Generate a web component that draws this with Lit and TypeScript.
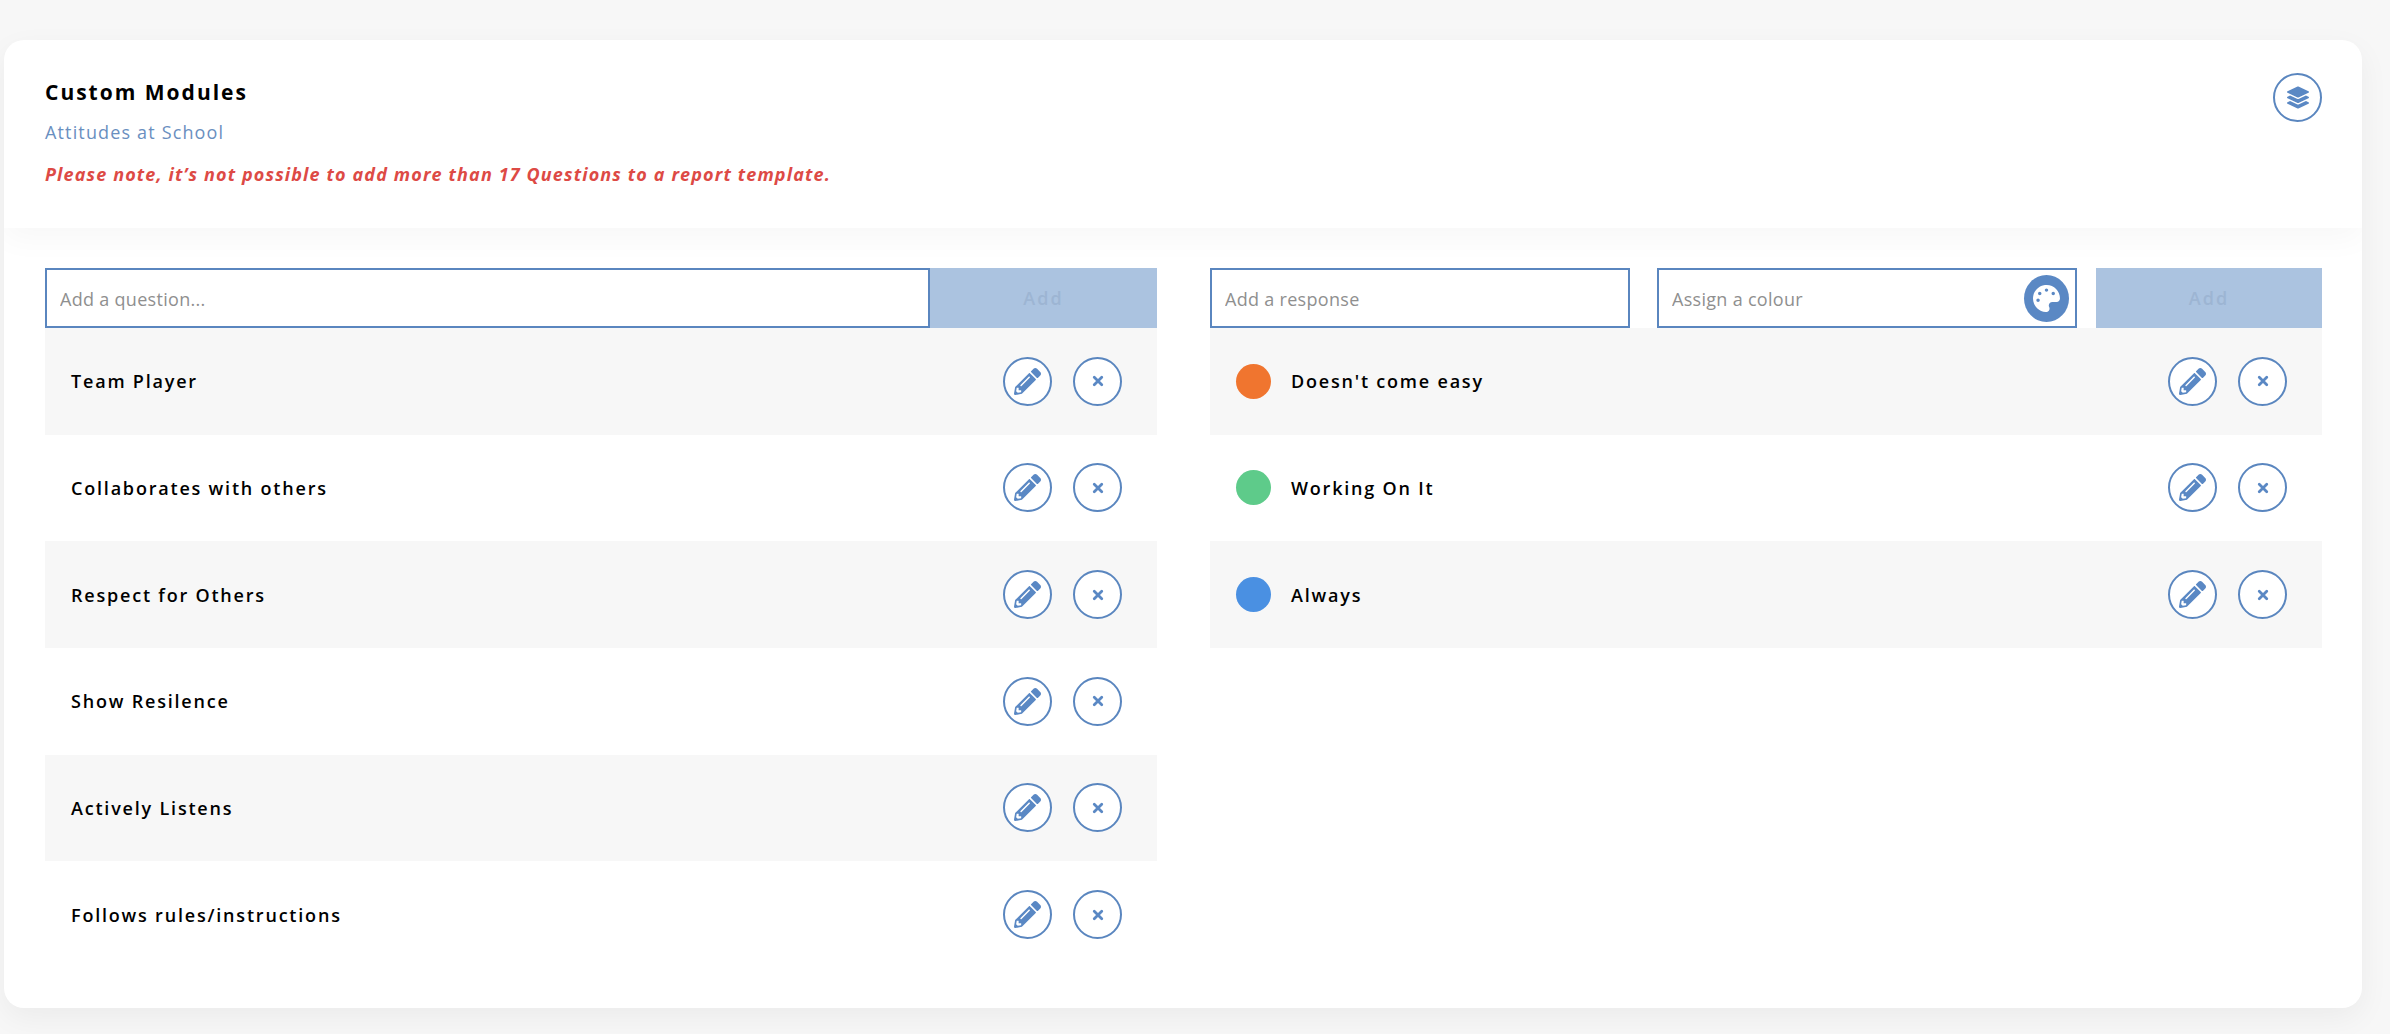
import { LitElement, html, css, svg } from 'lit';
import { customElement } from 'lit/decorators.js';

const PENCIL = svg`<path d="M497.9 142.1l-46.1 46.1c-4.7 4.7-12.3 4.7-17 0l-111-111c-4.7-4.7-4.7-12.3 0-17l46.1-46.1c18.7-18.7 49.1-18.7 67.9 0l60.1 60.1c18.8 18.7 18.8 49.1 0 67.9zM284.2 99.8L21.6 362.4.4 483.9c-2.9 16.4 11.4 30.6 27.8 27.8l121.5-21.3 262.6-262.6c4.7-4.7 4.7-12.3 0-17l-111-111c-4.8-4.7-12.4-4.7-17.1 0zM124.1 339.9c-5.5-5.5-5.5-14.3 0-19.8l154-154c5.5-5.5 14.3-5.5 19.8 0s5.5 14.3 0 19.8l-154 154c-5.5 5.5-14.3 5.5-19.8 0zM88 424h48v36.3l-64.5 11.3-31.1-31.1L51.7 376H88v48z"/>`;
const LAYERS = svg`<path d="M12.41 148.02l232.94 105.67c6.8 3.09 14.49 3.09 21.29 0l232.94-105.67c16.55-7.51 16.55-32.52 0-40.03L266.65 2.31a25.607 25.607 0 0 0-21.29 0L12.41 107.98c-16.55 7.51-16.55 32.53 0 40.04zm487.18 88.28l-58.09-26.33-161.64 73.27c-7.56 3.43-15.59 5.17-23.86 5.17s-16.29-1.74-23.86-5.17L70.51 209.97l-58.1 26.33c-16.55 7.5-16.55 32.5 0 40l232.94 105.59c6.8 3.08 14.49 3.08 21.29 0L499.59 276.3c16.55-7.5 16.55-32.5 0-40zm0 127.8l-57.87-26.23-161.86 73.37c-7.56 3.43-15.59 5.17-23.86 5.17s-16.29-1.74-23.86-5.17L70.29 337.87 12.41 364.1c-16.55 7.5-16.55 32.5 0 40l232.94 105.59c6.8 3.08 14.49 3.08 21.29 0L499.59 404.1c16.55-7.5 16.55-32.5 0-40z"/>`;
const PALETTE = svg`<path d="M204.3 5C104.9 24.4 24.8 104.3 5.2 203.4c-37 187 131.7 326.4 258.8 306.7 41.2-6.4 61.4-54.6 42.5-91.7-23.1-45.4 9.9-98.4 60.9-98.4h79.7c35.8 0 64.8-29.6 64.9-65.3C511.5 97.1 368.1-26.9 204.3 5zM96 320c-17.7 0-32-14.3-32-32s14.3-32 32-32 32 14.3 32 32-14.3 32-32 32zm32-128c-17.7 0-32-14.3-32-32s14.3-32 32-32 32 14.3 32 32-14.3 32-32 32zm128-64c-17.7 0-32-14.3-32-32s14.3-32 32-32 32 14.3 32 32-14.3 32-32 32zm128 64c-17.7 0-32-14.3-32-32s14.3-32 32-32 32 14.3 32 32-14.3 32-32 32z"/>`;
const TIMES = svg`<path d="M96 96l320 320M416 96L96 416" fill="none" stroke="currentColor" stroke-width="120" stroke-linecap="round"/>`;

const QUESTIONS = [
	'Team Player',
	'Collaborates with others',
	'Respect for Others',
	'Show Resilence',
	'Actively Listens',
	'Follows rules/instructions',
];

const RESPONSES = [
	{ label: "Doesn't come easy", colour: '#f0752f' },
	{ label: 'Working On It', colour: '#5ecb8a' },
	{ label: 'Always', colour: '#4a90e2' },
];

@customElement('app-root')
export default class AppRoot extends LitElement {

	static get styles() {
		return css`
			:host {
				display: block;
				min-height: 1034px;
				box-sizing: border-box;
				padding: 40px 28px 26px 4px;
				background: #f7f7f7;
				font-family: "Open Sans", sans-serif;
			}

			.card {
				background: white;
				border-radius: 20px;
				box-shadow: 0px 10px 30px rgba(0, 0, 0, .05);
				overflow: hidden;
				height: 968px;
			}

			.header {
				height: 188px;
				box-sizing: border-box;
				padding: 33px 40px 0 41px;
				display: flex;
				justify-content: space-between;
				align-items: flex-start;
				box-shadow: 0px 10px 30px rgba(0, 0, 0, .035);
			}

			.title {
				margin-top: 5px;
				font-size: 21px;
				line-height: 28px;
				font-weight: 700;
				letter-spacing: 2px;
				color: black;
			}

			.subtitle {
				margin-top: 14px;
				font-size: 18px;
				line-height: 24px;
				letter-spacing: 1.15px;
				color: #6a8fbf;
			}

			.note {
				margin-top: 18px;
				font-size: 18px;
				line-height: 24px;
				font-weight: 700;
				font-style: italic;
				letter-spacing: 1.13px;
				color: #dd4a45;
			}

			.columns {
				display: grid;
				grid-template-columns: 1112px 1112px;
				column-gap: 53px;
				padding: 40px 40px 0 41px;
			}

			.form {
				display: flex;
				height: 60px;
			}

			.form.spaced {
				gap: 27px;
			}

			.form.spaced .field {
				width: 420px;
				flex: none;
			}

			.form.spaced .add {
				width: 226px;
				margin-left: -8px;
			}

			.field {
				flex: 1;
				min-width: 0;
				display: flex;
				align-items: center;
				box-sizing: border-box;
				border: 2px solid #5a86bf;
				background: white;
				padding: 0 6px 0 13px;
			}

			.field input {
				flex: 1;
				min-width: 0;
				border: none;
				outline: none;
				padding: 2px 0 0;
				background: transparent;
				font-family: inherit;
				font-size: 18px;
				letter-spacing: .3px;
				color: #333;
			}

			.field input::placeholder {
				color: #8f8f8f;
				opacity: 1;
			}

			.add {
				width: 227px;
				flex: none;
				border: none;
				padding: 0;
				background: #abc3e0;
				color: #9db5d3;
				font-family: inherit;
				font-size: 18px;
				font-weight: 600;
				letter-spacing: 2px;
			}

			.swatch-btn {
				width: 45px;
				height: 47px;
				flex: none;
				border-radius: 50%;
				background: #5a88c4;
				color: white;
				display: grid;
				place-items: center;
			}

			.swatch-btn svg {
				width: 27px;
				height: 27px;
				fill: currentColor;
			}

			.row {
				height: 106.67px;
				display: flex;
				align-items: center;
				padding: 0 35px 0 26px;
			}

			.row:nth-child(odd) {
				background: #f7f7f7;
			}

			.dot {
				width: 35px;
				height: 35px;
				border-radius: 50%;
				margin-right: 20px;
				flex: none;
			}

			.label {
				flex: 1;
				font-size: 18px;
				font-weight: 600;
				letter-spacing: 1.8px;
				color: black;
			}

			.actions {
				display: flex;
				gap: 21px;
			}

			.icon-btn {
				width: 49px;
				height: 49px;
				box-sizing: border-box;
				border: 2px solid #5a86bf;
				border-radius: 50%;
				background: white;
				color: #5a88c4;
				display: grid;
				place-items: center;
				flex: none;
			}

			.icon-btn svg {
				fill: currentColor;
				display: block;
			}

			.icon-btn svg.pencil {
				width: 27px;
				height: 27px;
			}

			.icon-btn svg.times {
				width: 12px;
				height: 12px;
			}

			.icon-btn svg.layers {
				width: 22px;
				height: 23px;
			}
		`;
	}

	icon(shape: unknown, name: string) {
		return html`<div class="icon-btn"><svg class=${name} viewBox="0 0 512 512">${shape}</svg></div>`;
	}

	actions() {
		return html`<div class="actions">${this.icon(PENCIL, 'pencil')}${this.icon(TIMES, 'times')}</div>`;
	}

	render() {
		return html`
			<div class="card">
				<div class="header">
					<div>
						<div class="title">Custom Modules</div>
						<div class="subtitle">Attitudes at School</div>
						<div class="note">Please note, it’s not possible to add more than 17 Questions to a report template.</div>
					</div>
					${this.icon(LAYERS, 'layers')}
				</div>
				<div class="columns">
					<div>
						<div class="form">
							<label class="field"><input placeholder="Add a question..."></label>
							<button class="add">Add</button>
						</div>
						<div>
							${QUESTIONS.map(q => html`
								<div class="row"><span class="label">${q}</span>${this.actions()}</div>
							`)}
						</div>
					</div>
					<div>
						<div class="form spaced">
							<label class="field"><input placeholder="Add a response"></label>
							<label class="field">
								<input placeholder="Assign a colour">
								<span class="swatch-btn"><svg viewBox="0 0 512 512">${PALETTE}</svg></span>
							</label>
							<button class="add">Add</button>
						</div>
						<div>
							${RESPONSES.map(r => html`
								<div class="row">
									<span class="dot" style="background: ${r.colour}"></span>
									<span class="label">${r.label}</span>
									${this.actions()}
								</div>
							`)}
						</div>
					</div>
				</div>
			</div>
		`;
	}
}
